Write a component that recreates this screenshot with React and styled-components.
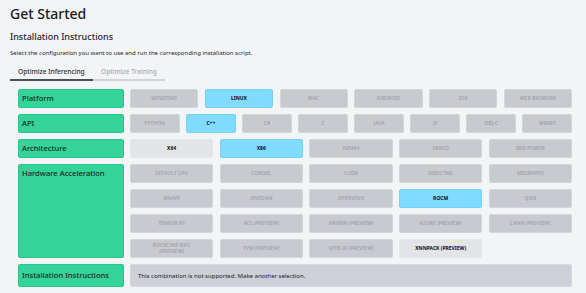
import React from 'react'
import { styled, createGlobalStyle } from 'styled-components'

const GlobalStyle = createGlobalStyle`
  body {
    margin: 0;
    background: #f3f4f6;
    font-family: "Noto Sans", "Open Sans", sans-serif;
  }
`

const rows = [
  {
    label: 'Platform',
    cols: 6,
    options: [
      ['Windows'], ['Linux', 'selected'], ['Mac'], ['Android'], ['iOS'], ['Web Browser'],
    ],
  },
  {
    label: 'API',
    cols: 8,
    options: [
      ['Python'], ['C++', 'selected'], ['C#'], ['C'], ['Java'], ['JS'], ['Obj-C'], ['WinRT'],
    ],
  },
  {
    label: 'Architecture',
    cols: 5,
    options: [
      ['X64', 'open'], ['X86', 'selected'], ['ARM64'], ['ARM32'], ['IBM Power'],
    ],
  },
  {
    label: 'Hardware Acceleration',
    cols: 5,
    options: [
      ['Default CPU'], ['CoreML'], ['CUDA'], ['DirectML'], ['MIGraphX'],
      ['NNAPI'], ['oneDNN'], ['OpenVINO'], ['ROCm', 'selected'], ['QNN'],
      ['Tensor RT'], ['ACL (Preview)'], ['ArmNN (Preview)'], ['Azure (Preview)'], ['CANN (Preview)'],
      ['Rockchip NPU (Preview)'], ['TVM (Preview)'], ['Vitis AI (Preview)'], ['XNNPACK (Preview)', 'open'],
    ],
  },
]

const App = () => {
  return (
    <Page>
      <GlobalStyle />
      <Title>Get Started</Title>
      <Subtitle>Installation Instructions</Subtitle>
      <Description>
        Select the configuration you want to use and run the corresponding installation script.
      </Description>
      <Tabs>
        <Tab $active>Optimize Inferencing</Tab>
        <Tab>Optimize Training</Tab>
      </Tabs>
      <Matrix>
        {rows.map((row) => (
          <React.Fragment key={row.label}>
            <Label>{row.label}</Label>
            <Options $cols={row.cols}>
              {row.options.map(([name, state]) => (
                <Option key={name} $state={state || 'disabled'}>
                  {name}
                </Option>
              ))}
            </Options>
          </React.Fragment>
        ))}
        <Label $tall>Installation Instructions</Label>
        <Message>This combination is not supported. Make another selection.</Message>
      </Matrix>
    </Page>
  )
}

const Page = styled.div`
  padding: 3px 10px 0 10px;
  color: #1f2329;
`

const Title = styled.h1`
  margin: 0;
  font-size: 14px;
  line-height: 22px;
  font-weight: 500;
  color: #16191d;
`

const Subtitle = styled.h2`
  margin: 5px 0 0;
  font-size: 9px;
  line-height: 14px;
  font-weight: 500;
  color: #23272c;
`

const Description = styled.p`
  margin: 3px 0 0;
  font-size: 6px;
  line-height: 12px;
  color: #23272c;
`

const Tabs = styled.div`
  display: flex;
  margin-top: 6px;
  width: 155px;
`

const Tab = styled.div`
  box-sizing: border-box;
  padding: 0 8px;
  height: 16px;
  line-height: 14px;
  font-size: 6.6px;
  font-weight: 500;
  color: ${(p) => (p.$active ? '#2b2f35' : '#a8abb0')};
  border-bottom: 2px solid ${(p) => (p.$active ? '#4b4f55' : '#d1d3d6')};
  flex: ${(p) => (p.$active ? '0 0 83px' : '1')};
`

const Matrix = styled.div`
  display: grid;
  grid-template-columns: 106px 442px;
  column-gap: 6px;
  row-gap: 6px;
  margin: 8px 0 0 8px;
`

const Label = styled.div`
  box-sizing: border-box;
  background: #34d399;
  border: 1px solid #2cc58d;
  border-radius: 2px;
  padding: 0 3px;
  font-size: 7.6px;
  font-weight: 500;
  color: #1c2a24;
  line-height: ${(p) => (p.$tall ? '21px' : '17px')};
`

const Options = styled.div`
  display: grid;
  grid-template-columns: repeat(${(p) => p.$cols}, 1fr);
  grid-auto-rows: 19px;
  gap: 6px 6.5px;
`

const optionColors = {
  disabled: { bg: '#c9cacf', border: '#d4d5d9', color: '#a0a2a7', weight: 600 },
  selected: { bg: '#80dbff', border: '#72d2f7', color: '#0c0f12', weight: 700 },
  open: { bg: '#e2e4e7', border: '#e6e7ea', color: '#0c0f12', weight: 700 },
}

const Option = styled.div`
  box-sizing: border-box;
  display: flex;
  align-items: center;
  justify-content: center;
  text-align: center;
  padding: 0 10px;
  border-radius: 2px;
  background: ${(p) => optionColors[p.$state].bg};
  border: 1px solid ${(p) => optionColors[p.$state].border};
  color: ${(p) => optionColors[p.$state].color};
  font-weight: ${(p) => optionColors[p.$state].weight};
  font-size: 5px;
  line-height: 5.5px;
  text-transform: uppercase;
`

const Message = styled.div`
  box-sizing: border-box;
  height: 23px;
  display: flex;
  align-items: center;
  padding: 0 7px;
  background: #cdd0d7;
  border: 1px solid #d6d8de;
  border-radius: 2px;
  font-size: 6px;
  color: #1c2026;
`

export default App
